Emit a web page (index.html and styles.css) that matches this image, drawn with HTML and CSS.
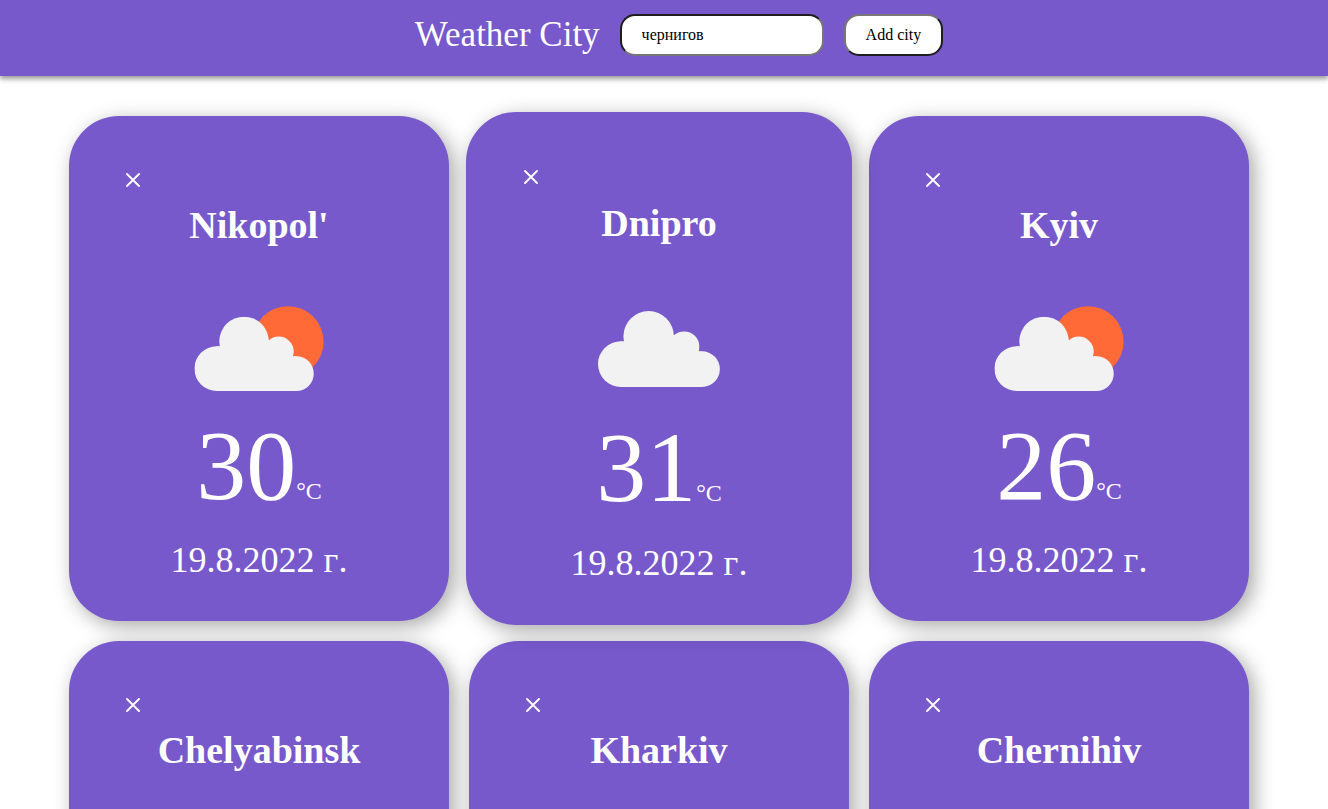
FILE: index.html
```html
<!DOCTYPE html>
<html lang="en">
<head>
  <meta charset="utf-8">
  <meta name="viewport" content="width=device-width, initial-scale=1">
  <title>Weather City</title>
  <link rel="stylesheet" href="styles.css">
</head>
<body>
  <svg class="symbols" aria-hidden="true">
    <symbol id="cross" viewBox="0 0 14 14">
      <path d="M1 1L13 13M13 1L1 13" fill="none" stroke="#fff" stroke-width="1.9" stroke-linecap="round"/>
    </symbol>
    <symbol id="cloud" viewBox="73 79 360 224">
      <g fill="#f2f2f2">
        <circle cx="140.500" cy="235.500" r="67.500"/>
        <circle cx="222.500" cy="153.500" r="74.500"/>
        <circle cx="327" cy="184" r="45"/>
        <circle cx="380" cy="250.500" r="52.500"/>
        <path d="M140 303V168.500H149L222 150L297 150L371 198.500H380V303Z"/>
      </g>
    </symbol>
    <symbol id="partly" viewBox="73 47 389 256">
      <circle cx="355" cy="154.500" r="107"/>
      <use href="#cloud" x="73" y="79" width="360" height="224"/>
    </symbol>
  </svg>

  <header class="header">
    <h1 class="logo">Weather City</h1>
    <form class="search">
      <input class="search-input" type="text" value="чернигов" aria-label="City">
      <button class="search-button" type="button">Add city</button>
    </form>
  </header>

  <main class="cards">
    <article class="card">
      <button class="close" type="button" aria-label="Remove Nikopol'"><svg class="cross"><use href="#cross"/></svg></button>
      <h2 class="name">Nikopol'</h2>
      <div class="weather"><svg class="partly"><use href="#partly"/></svg></div>
      <p class="temp">30<span class="unit">°C</span></p>
      <p class="date">19.8.2022 г.</p>
    </article>
    <article class="card card-active">
      <button class="close" type="button" aria-label="Remove Dnipro"><svg class="cross"><use href="#cross"/></svg></button>
      <h2 class="name">Dnipro</h2>
      <div class="weather"><svg class="cloud"><use href="#cloud"/></svg></div>
      <p class="temp">31<span class="unit">°C</span></p>
      <p class="date">19.8.2022 г.</p>
    </article>
    <article class="card">
      <button class="close" type="button" aria-label="Remove Kyiv"><svg class="cross"><use href="#cross"/></svg></button>
      <h2 class="name">Kyiv</h2>
      <div class="weather"><svg class="partly"><use href="#partly"/></svg></div>
      <p class="temp">26<span class="unit">°C</span></p>
      <p class="date">19.8.2022 г.</p>
    </article>
    <article class="card">
      <button class="close" type="button" aria-label="Remove Chelyabinsk"><svg class="cross"><use href="#cross"/></svg></button>
      <h2 class="name">Chelyabinsk</h2>
    </article>
    <article class="card">
      <button class="close" type="button" aria-label="Remove Kharkiv"><svg class="cross"><use href="#cross"/></svg></button>
      <h2 class="name">Kharkiv</h2>
    </article>
    <article class="card">
      <button class="close" type="button" aria-label="Remove Chernihiv"><svg class="cross"><use href="#cross"/></svg></button>
      <h2 class="name">Chernihiv</h2>
    </article>
  </main>
</body>
</html>
```

FILE: styles.css
```css
* {
  box-sizing: border-box;
}

body {
  margin: 0;
  background: #fff;
  color: #fff;
  font-family: "Liberation Serif", "Times New Roman", serif;
}

h1,
h2,
p {
  margin: 0;
}

.symbols {
  position: absolute;
  width: 0;
  height: 0;
}

.header {
  display: flex;
  flex-wrap: wrap;
  align-items: center;
  justify-content: center;
  gap: 20px;
  padding: 14px 0 20px 30px;
  background: #7759cc;
  box-shadow: 0 3px 5px rgba(0, 0, 0, 0.4);
}

.logo {
  font-size: 35px;
  line-height: 40px;
  font-weight: 400;
}

.search {
  display: flex;
  gap: 20px;
}

.search-input,
.search-button {
  height: 42px;
  padding: 0 20px;
  border-width: 2px;
  border-radius: 15px;
  background: #fff;
  color: #000;
  font-family: inherit;
  font-size: 16px;
}

.search-input {
  width: 204px;
  border-style: solid;
  border-color: #1e1e1e #767676 #767676 #1e1e1e;
}

.search-button {
  border-style: solid;
  border-color: #767676 #1e1e1e #1e1e1e #767676;
}

.cards {
  display: grid;
  grid-template-columns: repeat(auto-fit, minmax(320px, 380px));
  justify-content: center;
  gap: 20px;
  padding: 40px 10px 20px 0;
}

.card {
  display: flex;
  flex-direction: column;
  align-items: center;
  min-height: 505px;
  padding: 50px 50px 40px;
  border-radius: 50px;
  background: #7759cc;
  box-shadow: 5px 5px 20px rgba(0, 0, 0, 0.35);
}

.card-active {
  position: relative;
  z-index: 1;
  margin: -4px -3px;
  padding-top: 51px;
  padding-left: 51px;
  padding-right: 51px;
}

.close {
  display: grid;
  place-items: center;
  align-self: flex-start;
  width: 28px;
  height: 28px;
  padding: 0;
  border: 0;
  background: none;
}

.cross {
  width: 14px;
  height: 14px;
}

.name {
  margin-top: 9px;
  font-size: 38px;
  line-height: 44px;
}

.weather {
  display: grid;
  place-items: center;
  height: 85px;
  margin-top: 59px;
}

.partly {
  width: 130px;
  height: 85px;
  fill: #ff6a36;
}

.cloud {
  width: 122px;
  height: 76px;
}

.temp {
  margin-top: 20px;
  font-size: 100px;
  line-height: 110px;
}

.unit {
  font-size: 24px;
  line-height: 24px;
}

.date {
  margin-top: 19px;
  font-size: 36px;
  line-height: 40px;
  font-kerning: none;
}

.card-active .name {
  margin-top: 10px;
}

.card-active .weather {
  margin-top: 61px;
}

.card-active .temp {
  margin-top: 22px;
}

.card-active .date {
  margin-top: 20px;
}
```
